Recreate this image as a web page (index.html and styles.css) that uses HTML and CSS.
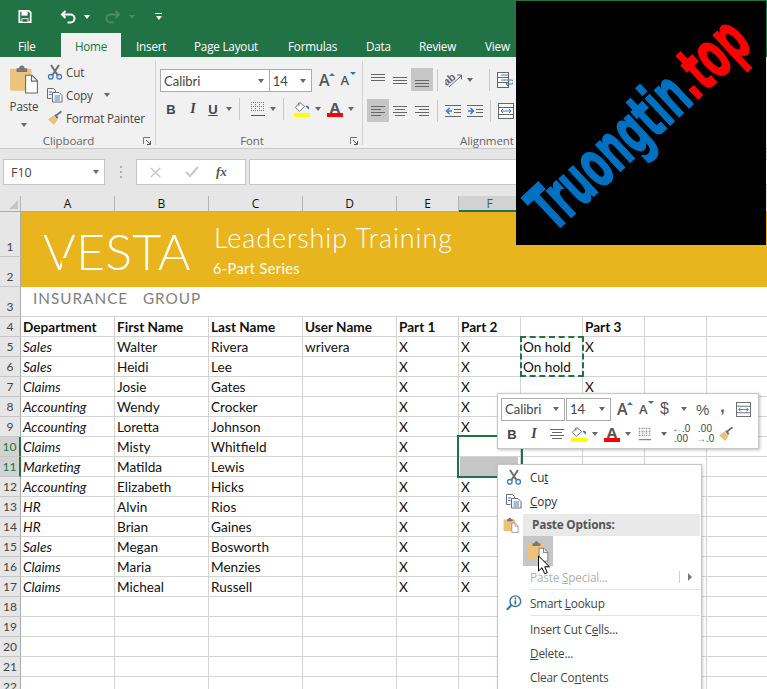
FILE: index.html
```html
<!DOCTYPE html>
<html lang="en">
<head>
<meta charset="utf-8">
<title>Excel</title>
<link rel="stylesheet" href="styles.css">
</head>
<body>
<svg class="sprite" aria-hidden="true">
  <symbol id="save" viewBox="0 0 16 16"><path d="M1.500 1.500h11l2 2v11h-13z" fill="none" stroke="#fff" stroke-width="2"/><rect x="4" y="2" width="7" height="5" fill="#fff"/><rect x="4" y="10" width="8" height="4" fill="#fff"/><rect x="5" y="11" width="6" height="3" fill="#217346"/></symbol>
  <symbol id="undo" viewBox="0 0 16 16"><path d="M5 2 1.500 5.500 5 9M2 5.500h8a4 4 0 0 1 0 8H7" fill="none" stroke="currentColor" stroke-width="2"/></symbol>
  <symbol id="redo" viewBox="0 0 16 16"><path d="M11 2l3.500 3.500L11 9M14 5.500H6a4 4 0 0 0 0 8h3" fill="none" stroke="currentColor" stroke-width="2"/></symbol>
  <symbol id="cut" viewBox="0 0 16 16"><path d="M4 1l6.500 10M12 1 5.500 11" stroke="#6d6d6d" stroke-width="2" fill="none"/><circle cx="3.800" cy="12.800" r="2.300" fill="none" stroke="#3f7cbc" stroke-width="1.300"/><circle cx="12.200" cy="12.800" r="2.300" fill="none" stroke="#3f7cbc" stroke-width="1.300"/></symbol>
  <symbol id="copy" viewBox="0 0 16 16"><path d="M.5 1.500h6l2 2v2M.5 1.500v10h4" fill="none" stroke="#6d6d6d"/><path d="M5.500 5.500h6.500l3 3v6.500H5.500z" fill="#fff" stroke="#6d6d6d"/><path d="M2 5h3M2 7.500h2.500M7.500 9h5.500M7.500 11h5.500M7.500 13h5.500" stroke="#3f7cbc"/></symbol>
  <symbol id="brush" viewBox="0 0 16 16"><path d="M1 9.500 6.500 5.500 10.500 10 7 15z" fill="#e9c27e"/><path d="M7 5l3 4 1.500-1.500L10 6l5-4-1-1.500-5 4z" fill="#6d6d6d"/></symbol>
  <symbol id="paste" viewBox="0 0 28 28"><path d="M1 4.500h19a1 1 0 0 1 1 1V25H2a1 1 0 0 1-1-1z" fill="#edc27c"/><path d="M7 4h2.500a2.500 2.500 0 0 1 5 0H17v3.500H7z" fill="#777"/><path d="M15.500 10.500h6l5 5V27h-11z" fill="#fff" stroke="#666"/><path d="M21 10.500v5.500h5.500" fill="none" stroke="#666"/></symbol>
  <symbol id="launch" viewBox="0 0 8 8"><path d="M.5 7V.5H7" fill="none" stroke="#777"/><path d="M3 3l4 4M7.500 4v3.500H4" fill="none" stroke="#555"/></symbol>
  <symbol id="top" viewBox="0 0 16 16"><path d="M1 2.500h14M1 5.500h14M1 8.500h14" stroke="#666"/></symbol>
  <symbol id="mid" viewBox="0 0 16 16"><path d="M1 5.500h14M1 8.500h14M1 11.500h14" stroke="#666"/></symbol>
  <symbol id="bot" viewBox="0 0 16 16"><path d="M1 8.500h14M1 11.500h14M1 14.500h14" stroke="#666"/></symbol>
  <symbol id="left" viewBox="0 0 16 16"><path d="M1 3.500h14M1 6.500h10M1 9.500h14M1 12.500h10" stroke="#666"/></symbol>
  <symbol id="center" viewBox="0 0 16 16"><path d="M1 3.500h14M3 6.500h10M1 9.500h14M3 12.500h10" stroke="#666"/></symbol>
  <symbol id="right" viewBox="0 0 16 16"><path d="M1 3.500h14M5 6.500h10M1 9.500h14M5 12.500h10" stroke="#666"/></symbol>
  <symbol id="outdent" viewBox="0 0 16 16"><path d="M0 2.500h16M9 6.500h7M9 9.500h7M0 13.500h16" stroke="#666"/><path d="M7 8H2M4.500 5 1.500 8l3 3" fill="none" stroke="#3f7cbc" stroke-width="1.500"/></symbol>
  <symbol id="indent" viewBox="0 0 16 16"><path d="M0 2.500h16M9 6.500h7M9 9.500h7M0 13.500h16" stroke="#666"/><path d="M1 8h5M3.500 5l3 3-3 3" fill="none" stroke="#3f7cbc" stroke-width="1.500"/></symbol>
  <symbol id="orient" viewBox="0 0 18 16"><text x="0" y="12" font-family="Liberation Sans" font-size="11" font-weight="700" fill="#666" transform="rotate(-40 4 11)">ab</text><path d="M4 15 16 4M12 3h4.500v4.500" fill="none" stroke="#666"/></symbol>
  <symbol id="wrap" viewBox="0 0 16 16"><rect x=".5" y=".5" width="11" height="15" fill="#fff" stroke="#666"/><path d="M.5 5.500h11M.5 10.500h11" stroke="#666"/><path d="M4 3h8M4 8h10.500a1.500 1.500 0 0 1 0 4H9M11 10l-2 2 2 2" fill="none" stroke="#3f7cbc"/></symbol>
  <symbol id="merge" viewBox="0 0 16 16"><rect x=".5" y=".5" width="15" height="15" fill="#fff" stroke="#666"/><path d="M.5 4.500h15M.5 11.500h15" stroke="#666"/><path d="M3 8h10M5 6 3 8l2 2M11 6l2 2-2 2" fill="none" stroke="#3f7cbc"/></symbol>
  <symbol id="bucket" viewBox="0 0 18 12"><path d="M6.500 1 1.500 6.500 6 11l6-5.500z" fill="#fff" stroke="#666"/><path d="M5.500 1v4" stroke="#666"/><path d="M13 5c2-1 4 0 4 2s-1 2-1.500 1-1.500-1-2.500-3z" fill="#3f7cbc"/></symbol>
  <symbol id="borders" viewBox="0 0 16 16"><path d="M1 1.500h14M1 5.500h14M1 9.500h14M1.500 1v10M5.500 1v10M9.500 1v10M13.500 1v10" stroke="#777" stroke-dasharray="1 1"/><path d="M1 14.500h14" stroke="#555"/></symbol>
  <symbol id="lookup" viewBox="0 0 18 18"><circle cx="10.500" cy="7" r="6" fill="#fff" stroke="#2e75b6" stroke-width="1.600"/><path d="M6 11.500 1 16.500" stroke="#2e75b6" stroke-width="2.400"/><circle cx="10.500" cy="4" r="1.100" fill="#555"/><path d="M10.500 6v4.500" stroke="#555" stroke-width="1.800"/></symbol>
  <symbol id="arrow" viewBox="0 0 13 20"><path d="M1 1v15l3.500-3.300 2.700 6 2.600-1.100-2.600-5.800H12z" fill="#fff" stroke="#000"/></symbol>
</svg>

<div class="app">
  <header class="title">
    <svg class="qa-save"><use href="#save"/></svg>
    <svg class="qa-undo"><use href="#undo"/></svg><span class="caret white"></span>
    <svg class="qa-redo"><use href="#redo"/></svg><span class="caret dim"></span>
    <span class="qa-custom"><span class="bar"></span><span class="caret white"></span></span>
  </header>
  <nav class="tabs">
    <span class="tab file">File</span>
    <span class="tab home">Home</span>
    <span class="tab insert">Insert</span>
    <span class="tab pl">Page Layout</span>
    <span class="tab fm">Formulas</span>
    <span class="tab dt">Data</span>
    <span class="tab rv">Review</span>
    <span class="tab vw">View</span>
  </nav>
  <section class="ribbon">
    <div class="group g-clip">
      <div class="body clip">
        <div class="paste-btn">
          <svg class="i-paste"><use href="#paste"/></svg>
          <span class="paste-label">Paste</span>
          <span class="caret"></span>
        </div>
        <div class="clip-list">
          <div class="clip-item"><svg class="i16"><use href="#cut"/></svg><span>Cut</span></div>
          <div class="clip-item"><svg class="i16"><use href="#copy"/></svg><span>Copy</span><span class="caret c-copy"></span></div>
          <div class="clip-item"><svg class="i16"><use href="#brush"/></svg><span>Format Painter</span></div>
        </div>
      </div>
      <div class="label"><span class="label-text">Clipboard</span><svg class="launch"><use href="#launch"/></svg></div>
    </div>
    <div class="group g-font">
      <div class="body font">
        <div class="row r1">
          <div class="select s-font"><span>Calibri</span><span class="caret"></span></div>
          <div class="select s-size"><span>14</span><span class="caret"></span></div>
          <span class="glyph grow">A<span class="up"></span></span>
          <span class="glyph shrink">A<span class="down"></span></span>
        </div>
        <div class="row r2">
          <span class="fmt b">B</span>
          <span class="fmt it">I</span>
          <span class="fmt un">U</span>
          <span class="caret"></span>
          <span class="vsep"></span>
          <svg class="i16"><use href="#borders"/></svg>
          <span class="caret"></span>
          <span class="vsep"></span>
          <span class="color c-fill"><svg class="i-bucket"><use href="#bucket"/></svg><span class="swatch yellow"></span></span>
          <span class="caret"></span>
          <span class="color colorA"><span class="aletter">A</span><span class="swatch red"></span></span>
          <span class="caret"></span>
        </div>
      </div>
      <div class="label"><span class="label-text">Font</span><svg class="launch"><use href="#launch"/></svg></div>
    </div>
    <div class="group g-align">
      <div class="body align">
        <div class="row ar1">
          <span class="ab"><svg class="i16"><use href="#top"/></svg></span>
          <span class="ab"><svg class="i16"><use href="#mid"/></svg></span>
          <span class="ab on"><svg class="i16"><use href="#bot"/></svg></span>
          <span class="vsep v-a"></span>
          <svg class="i18"><use href="#orient"/></svg><span class="caret"></span>
          <span class="vsep v-b"></span>
          <svg class="i16"><use href="#wrap"/></svg>
        </div>
        <div class="row ar2">
          <span class="ab on"><svg class="i16"><use href="#left"/></svg></span>
          <span class="ab"><svg class="i16"><use href="#center"/></svg></span>
          <span class="ab"><svg class="i16"><use href="#right"/></svg></span>
          <span class="vsep v-a"></span>
          <svg class="i16"><use href="#outdent"/></svg>
          <svg class="i16 ind"><use href="#indent"/></svg>
          <span class="vsep"></span>
          <svg class="i16"><use href="#merge"/></svg>
        </div>
      </div>
      <div class="label l-align"><span class="label-text">Alignment</span></div>
    </div>
  </section>
  <section class="fbar">
    <div class="namebox"><span>F10</span><span class="caret"></span></div>
    <span class="grip"></span>
    <div class="fxbox">
      <svg class="fx-x" viewBox="0 0 12 12"><path d="M1 1l10 10M11 1 1 11" stroke="#c8c8c8" stroke-width="1.600"/></svg>
      <svg class="fx-c" viewBox="0 0 14 12"><path d="M1 6l4 4 8-9" fill="none" stroke="#c8c8c8" stroke-width="2"/></svg>
      <span class="fx">fx</span>
    </div>
    <div class="finput"></div>
  </section>
  <section class="sheet">
    <div class="hd corner"><span class="tri"></span></div><div class="hd">A</div><div class="hd">B</div><div class="hd">C</div><div class="hd">D</div><div class="hd">E</div><div class="hd active-col">F</div><div class="hd">G</div><div class="hd">H</div><div class="hd">I</div><div class="hd">J</div>

    <div class="rh">1</div>
    <div class="banner">
      <div class="vesta">VESTA<span class="vgap"></span></div>
      <div class="btitle"><div class="lead">Leadership Training</div><div class="series">6-Part Series</div></div>
    </div>
    <div class="rh">2</div>
    <div class="rh">3</div><div class="ins">INSURANCE&nbsp;&nbsp; GROUP</div>

    <div class="rh">4</div><div class="c h">Department</div><div class="c h">First Name</div><div class="c h">Last Name</div><div class="c h">User Name</div><div class="c h">Part 1</div><div class="c h">Part 2</div><div class="c"></div><div class="c h">Part 3</div><div class="c"></div><div class="c"></div>
    <div class="rh">5</div><div class="c e">Sales</div><div class="c">Walter</div><div class="c">Rivera</div><div class="c">wrivera</div><div class="c">X</div><div class="c">X</div><div class="c">On hold</div><div class="c">X</div><div class="c"></div><div class="c"></div>
    <div class="rh">6</div><div class="c e">Sales</div><div class="c">Heidi</div><div class="c">Lee</div><div class="c"></div><div class="c">X</div><div class="c">X</div><div class="c">On hold</div><div class="c"></div><div class="c"></div><div class="c"></div>
    <div class="rh">7</div><div class="c e">Claims</div><div class="c">Josie</div><div class="c">Gates</div><div class="c"></div><div class="c">X</div><div class="c">X</div><div class="c"></div><div class="c">X</div><div class="c"></div><div class="c"></div>
    <div class="rh">8</div><div class="c e">Accounting</div><div class="c">Wendy</div><div class="c">Crocker</div><div class="c"></div><div class="c">X</div><div class="c">X</div><div class="c"></div><div class="c"></div><div class="c"></div><div class="c"></div>
    <div class="rh">9</div><div class="c e">Accounting</div><div class="c">Loretta</div><div class="c">Johnson</div><div class="c"></div><div class="c">X</div><div class="c">X</div><div class="c"></div><div class="c"></div><div class="c"></div><div class="c"></div>
    <div class="rh active-row">10</div><div class="c e">Claims</div><div class="c">Misty</div><div class="c">Whitfield</div><div class="c"></div><div class="c">X</div><div class="c"></div><div class="c"></div><div class="c"></div><div class="c"></div><div class="c"></div>
    <div class="rh active-row">11</div><div class="c e">Marketing</div><div class="c">Matilda</div><div class="c">Lewis</div><div class="c"></div><div class="c">X</div><div class="c grey"></div><div class="c"></div><div class="c"></div><div class="c"></div><div class="c"></div>
    <div class="rh">12</div><div class="c e">Accounting</div><div class="c">Elizabeth</div><div class="c">Hicks</div><div class="c"></div><div class="c">X</div><div class="c">X</div><div class="c"></div><div class="c"></div><div class="c"></div><div class="c"></div>
    <div class="rh">13</div><div class="c e">HR</div><div class="c">Alvin</div><div class="c">Rios</div><div class="c"></div><div class="c">X</div><div class="c">X</div><div class="c"></div><div class="c"></div><div class="c"></div><div class="c"></div>
    <div class="rh">14</div><div class="c e">HR</div><div class="c">Brian</div><div class="c">Gaines</div><div class="c"></div><div class="c">X</div><div class="c">X</div><div class="c"></div><div class="c"></div><div class="c"></div><div class="c"></div>
    <div class="rh">15</div><div class="c e">Sales</div><div class="c">Megan</div><div class="c">Bosworth</div><div class="c"></div><div class="c">X</div><div class="c">X</div><div class="c"></div><div class="c"></div><div class="c"></div><div class="c"></div>
    <div class="rh">16</div><div class="c e">Claims</div><div class="c">Maria</div><div class="c">Menzies</div><div class="c"></div><div class="c">X</div><div class="c">X</div><div class="c"></div><div class="c"></div><div class="c"></div><div class="c"></div>
    <div class="rh">17</div><div class="c e">Claims</div><div class="c">Micheal</div><div class="c">Russell</div><div class="c"></div><div class="c">X</div><div class="c">X</div><div class="c"></div><div class="c"></div><div class="c"></div><div class="c"></div>
    <div class="rh">18</div><div class="c"></div><div class="c"></div><div class="c"></div><div class="c"></div><div class="c"></div><div class="c"></div><div class="c"></div><div class="c"></div><div class="c"></div><div class="c"></div>
    <div class="rh">19</div><div class="c"></div><div class="c"></div><div class="c"></div><div class="c"></div><div class="c"></div><div class="c"></div><div class="c"></div><div class="c"></div><div class="c"></div><div class="c"></div>
    <div class="rh">20</div><div class="c"></div><div class="c"></div><div class="c"></div><div class="c"></div><div class="c"></div><div class="c"></div><div class="c"></div><div class="c"></div><div class="c"></div><div class="c"></div>
    <div class="rh">21</div><div class="c"></div><div class="c"></div><div class="c"></div><div class="c"></div><div class="c"></div><div class="c"></div><div class="c"></div><div class="c"></div><div class="c"></div><div class="c"></div>
    <div class="rh">22</div><div class="c"></div><div class="c"></div><div class="c"></div><div class="c"></div><div class="c"></div><div class="c"></div><div class="c"></div><div class="c"></div><div class="c"></div><div class="c"></div>

    <div class="ants"></div>
    <div class="selection"></div>
  </section>
</div>

<div class="mini">
  <div class="mini-row">
    <div class="select m-font"><span>Calibri</span><span class="caret"></span></div>
    <div class="select m-size"><span>14</span><span class="caret"></span></div>
    <span class="glyph m-grow">A<span class="up"></span></span>
    <span class="glyph m-shrink">A<span class="down"></span></span>
    <span class="m-txt m-dollar">$</span><span class="caret"></span>
    <span class="m-txt m-pct">%</span>
    <span class="m-txt m-comma">,</span>
    <svg class="i-merge"><use href="#merge"/></svg>
  </div>
  <div class="mini-row mr2">
    <span class="fmt b">B</span>
    <span class="fmt it mit">I</span>
    <svg class="i16 mc"><use href="#center"/></svg>
    <span class="color mb"><svg class="i-bucket"><use href="#bucket"/></svg><span class="swatch yellow"></span></span>
    <span class="caret"></span>
    <span class="color colorA mA"><span class="aletter">A</span><span class="swatch red"></span></span>
    <span class="caret"></span>
    <svg class="i-mborder"><use href="#borders"/></svg>
    <span class="caret"></span>
    <span class="dec"><span class="dec-a"><span class="blue">←</span>.0</span><span class="dec-b">.00</span></span>
    <span class="dec dec2"><span class="dec-a">.00</span><span class="dec-b"><span class="blue">→</span>.0</span></span>
    <svg class="i-mbrush"><use href="#brush"/></svg>
  </div>
</div>

<div class="menu">
  <div class="mi"><span class="gut"><svg class="i16"><use href="#cut"/></svg></span><span class="mt blue-t">Cu<u>t</u></span></div>
  <div class="mi"><span class="gut"><svg class="i16"><use href="#copy"/></svg></span><span class="mt blue-t"><u>C</u>opy</span></div>
  <div class="mi-head"><span class="gut"><svg class="i-small-paste"><use href="#paste"/></svg></span><span class="mh">Paste Options:</span></div>
  <div class="mi-paste"><span class="pbtn"><svg class="i-paste2"><use href="#paste"/></svg></span></div>
  <div class="mi special"><span class="gut"></span><span class="mt dis">Paste <u>S</u>pecial...</span><span class="sub"><span class="subbar"></span><span class="subtri"></span></span></div>
  <div class="msep"></div>
  <div class="mi"><span class="gut"><svg class="i16"><use href="#lookup"/></svg></span><span class="mt">Smart <u>L</u>ookup</span></div>
  <div class="msep"></div>
  <div class="mi"><span class="gut"></span><span class="mt">Insert Cut C<u>e</u>lls...</span></div>
  <div class="mi"><span class="gut"></span><span class="mt"><u>D</u>elete...</span></div>
  <div class="mi"><span class="gut"></span><span class="mt">Clear Co<u>n</u>tents</span></div>
</div>
<svg class="cursor"><use href="#arrow"/></svg>

<div class="mark"><div class="mark-text"><span class="m-blue">Truongtin</span><span class="m-red">.top</span></div></div>
</body>
</html>
```
FILE: styles.css
```css
* { box-sizing: border-box; }
html, body { margin: 0; height: 689px; overflow: hidden; }
body { background: #e6e6e6; font-family: "Open Sans", "Noto Sans", sans-serif; color: #444; position: relative; width: 767px; }
.sprite { display: none; }
svg { display: block; flex: none; }
.i16 { width: 16px; height: 16px; }
.i18 { width: 18px; height: 16px; }

.caret { display: inline-block; width: 0; height: 0; border: 3.5px solid transparent; border-top: 4px solid #666; border-bottom: 0; flex: none; }
.caret.white { border-top-color: #fff; }
.caret.dim { border-top-color: #4c8a69; }

.title { height: 33px; background: #217346; display: flex; align-items: center; color: #fff; padding-left: 18px; }
.qa-save { width: 14px; height: 15px; margin-right: 28px; }
.qa-undo { width: 17px; height: 16px; color: #fff; margin-right: 7px; }
.qa-redo { width: 17px; height: 16px; color: #4c8a69; margin: 0 8px 0 14px; }
.qa-custom { margin-left: 20px; display: flex; flex-direction: column; align-items: center; gap: 2px; }
.bar { width: 7px; height: 1px; background: #fff; }

.tabs { height: 24px; background: #217346; display: flex; font-size: 11.7px; color: #fff; letter-spacing: -.2px; }
.tab { display: flex; align-items: center; height: 24px; padding-top: 1px; flex: none; }
.file { width: 61px; padding-left: 18px; }
.home { width: 60px; background: #f1f1f1; color: #217346; margin-right: 15px; justify-content: center; }
.insert { width: 58px; }
.pl { width: 94px; }
.fm { width: 78px; }
.dt { width: 53px; }
.rv { width: 66px; }

.ribbon { height: 92px; background: #f1f1f1; border-bottom: 1px solid #c9c9c9; display: flex; padding-top: 4px; }
.group { display: flex; flex-direction: column; height: 84px; border-right: 1px solid #d2d2d2; }
.g-clip { width: 156px; }
.g-font { width: 207px; }
.g-align { flex: 1; border-right: 0; }
.body { height: 72px; flex: none; }
.label { height: 14px; flex: none; font-size: 11.5px; color: #666; display: flex; align-items: center; justify-content: center; position: relative; letter-spacing: -.1px; }
.g-clip .label { padding-right: 18px; }
.g-font .label { padding-right: 14px; }
.l-align { justify-content: flex-start; padding-left: 97px; }
.launch { width: 8px; height: 8px; position: absolute; right: 4px; top: 4px; }

.clip { display: flex; padding-left: 8px; }
.paste-btn { width: 32px; display: flex; flex-direction: column; align-items: center; font-size: 11.7px; }
.i-paste { width: 30px; height: 30px; margin-top: 3px; }
.paste-label { margin-top: 3px; line-height: 18px; letter-spacing: -.2px; }
.paste-btn .caret { margin-top: 8px; }
.clip-list { margin-left: 7px; display: flex; flex-direction: column; margin-top: -1px; }
.clip-item { display: flex; align-items: center; height: 23px; gap: 3px; font-size: 11.7px; letter-spacing: -.2px; }
.c-copy { margin-left: 8px; }

.font { padding: 8px 0 0 4px; }
.row { display: flex; align-items: center; }
.r1 { height: 23px; }
.r2 { height: 22px; margin-top: 6px; }
.select { display: flex; align-items: center; justify-content: space-between; background: #fff; border: 1px solid #ababab; height: 23px; font-family: "Lato", sans-serif; font-size: 13px; color: #444; padding: 0 5px 0 3px; }
.s-font { width: 111px; border-right: 0; }
.s-size { width: 44px; }
.glyph { position: relative; font-size: 15px; font-weight: 600; color: #555; width: 22px; display: block; line-height: 23px; }
.grow { margin-left: 7px; font-size: 16px; }
.shrink { font-size: 13px; }
.up, .down { position: absolute; width: 0; height: 0; border: 3px solid transparent; left: 10px; }
.up { border-bottom: 3px solid #2e75b6; border-top: 0; top: 4px; }
.down { border-top: 3px solid #2e75b6; border-bottom: 0; top: 3px; left: 9px; }
.fmt { font-size: 13px; color: #444; width: 22px; text-align: center; font-family: "Liberation Sans", sans-serif; }
.b { font-weight: 700; }
.it { font-style: italic; font-family: "Liberation Serif", serif; font-weight: 700; font-size: 14px; }
.un { font-weight: 700; text-decoration: underline; width: 18px; margin-right: 4px; }
.vsep { width: 1px; height: 22px; background: #c8c8c8; margin: 0 7px; flex: none; }
.r2 .i16 { margin-left: 3px; margin-right: 4px; }
.color { display: flex; flex-direction: column; align-items: center; width: 16px; margin-right: 5px; }
.c-fill { margin-left: 3px; }
.colorA { margin-left: 6px; }
.i-bucket { width: 16px; height: 12px; }
.swatch { width: 16px; height: 4px; display: block; }
.yellow { background: #ff0; }
.red { background: #f00; }
.aletter { font-size: 15px; line-height: 12px; height: 12px; font-weight: 700; color: #555; }

.align { padding: 7px 0 0 4px; }
.ar1 { height: 23px; }
.ar2 { height: 23px; margin-top: 8px; }
.ab { width: 22px; height: 23px; display: flex; align-items: center; justify-content: center; }
.on { background: #c6c6c6; }
.ar1 .caret { margin-left: 4px; }
.v-a { margin: 0 7px 0 4px; }
.v-b { margin: 0 7px 0 16px; }
.ind { margin-left: 6px; }

.fbar { height: 47px; padding: 10px 0 11px 3px; display: flex; }
.namebox { width: 102px; height: 26px; background: #fff; border: 1px solid #c6c6c6; display: flex; align-items: center; justify-content: space-between; padding: 0 5px 0 7px; font-size: 12.5px; color: #444; }
.grip { width: 2px; height: 12px; margin: 7px 0 0 15px; background: repeating-linear-gradient(#b0b0b0 0 2px, transparent 2px 5px); }
.fxbox { width: 110px; height: 26px; margin-left: 14px; background: #fff; border: 1px solid #c6c6c6; display: flex; align-items: center; padding-left: 13px; }
.fx-x { width: 11px; height: 11px; }
.fx-c { width: 14px; height: 12px; margin-left: 24px; }
.fx { margin-left: 17px; font-family: "Liberation Serif", serif; font-style: italic; font-weight: 700; font-size: 13px; color: #555; }
.finput { flex: 1; margin-left: 3px; height: 26px; background: #fff; border: 1px solid #c6c6c6; border-right: 0; }

.sheet { position: relative; display: grid; grid-template-columns: 21px repeat(4, 94px) repeat(6, 62px); grid-template-rows: 16px 45px 30px 30px; grid-auto-rows: 20px; background: #fff; font-family: "Lato", sans-serif; font-size: 13.6px; color: #111; }
.hd { background: #e6e6e6; border-right: 1px solid #b4b4b4; border-bottom: 1px solid #ababab; font-size: 12px; text-align: center; line-height: 15px; color: #111; font-family: "Open Sans", sans-serif; }
.corner { position: relative; }
.tri { position: absolute; right: 2px; bottom: 2px; width: 0; height: 0; border-left: 9px solid transparent; border-bottom: 9px solid #c6c6c6; }
.active-col { background: #d2d2d2; border-bottom: 2px solid #217346; color: #217346; }
.rh { background: #e6e6e6; border-right: 1px solid #ababab; border-bottom: 1px solid #c6c6c6; font-size: 12px; text-align: center; color: #444; display: flex; align-items: flex-end; justify-content: center; line-height: 19px; font-family: "Lato", sans-serif; }
.active-row { background: #d2d2d2; border-right: 2px solid #217346; color: #217346; }
.banner { grid-column: 2 / -1; grid-row: span 2; background: #e8b51f; color: #fff; display: flex; font-family: "Lato", sans-serif; }
.vesta { position: relative; width: 192px; padding: 9px 0 0 22px; font-size: 50px; line-height: 60px; font-weight: 300; letter-spacing: .2px; }
.vgap { position: absolute; left: 41px; top: 46px; width: 12px; height: 13px; background: #e8b51f; }
.btitle { padding-top: 6px; }
.lead { font-size: 27px; line-height: 40px; font-weight: 300; letter-spacing: .9px; padding-left: 1px; }
.series { font-size: 14.5px; line-height: 20px; margin-top: 1px; letter-spacing: .4px; }
.ins { grid-column: 2 / -1; border-bottom: 1px solid #d4d4d4; color: #7f7f7f; font-size: 15.3px; letter-spacing: 1px; padding-left: 12px; line-height: 22px; }
.c { border-right: 1px solid #d4d4d4; border-bottom: 1px solid #d4d4d4; padding-left: 2px; line-height: 20px; white-space: nowrap; overflow: hidden; }
.h { font-weight: 700; }
.e { font-style: italic; }
.grey { background: linear-gradient(#c6c6c6, #c6c6c6) no-repeat 1px -1px / 58px 20px; }
.ants { position: absolute; grid-column: 8 / 9; grid-row: 6 / 8; inset: -1px -1px 0 -1px; border: 2px dashed #217346; }
.selection { position: absolute; grid-column: 7 / 8; grid-row: 11 / 13; inset: -2px -2px -1px -2px; border: 2px solid #217346; }

.mini { position: absolute; left: 497px; top: 393px; width: 262px; height: 56px; background: #fff; border: 1px solid #c6c6c6; box-shadow: 1px 1px 3px rgba(0,0,0,.25); padding: 3px 0 0 3px; }
.mini-row { display: flex; align-items: center; height: 24px; }
.m-font { width: 64px; border-right: 1px solid #ababab; }
.m-size { width: 45px; margin-left: 1px; }
.m-grow { margin-left: 6px; width: 20px; font-size: 16px; }
.m-shrink { width: 18px; font-size: 13px; margin-left: 2px; }
.m-txt { font-family: "Liberation Sans", sans-serif; color: #555; }
.m-dollar { font-size: 16px; margin-left: 3px; margin-right: 12px; }
.m-pct { font-size: 15px; margin-left: 9px; }
.m-comma { font-size: 16px; font-weight: 700; margin-left: 11px; margin-top: -4px; }
.i-merge { width: 15px; height: 15px; margin-left: 11px; }
.mr2 { margin-top: 1px; height: 24px; }
.mc { margin-left: 4px; }
.mb { margin-left: 6px; }
.mA { margin-left: 6px; }
.i-mborder { width: 14px; height: 14px; margin-left: 7px; margin-right: 9px; }
.dec { display: flex; flex-direction: column; font-family: "Liberation Sans", sans-serif; font-size: 10px; line-height: 10px; color: #444; text-align: right; width: 16px; margin-left: 5px; }
.dec2 { margin-left: 8px; }
.blue { color: #2e75b6; }
.i-mbrush { width: 16px; height: 16px; margin-left: 6px; }

.menu { position: absolute; left: 497px; top: 464px; width: 205px; height: 240px; background: #fff; border: 1px solid #c6c6c6; box-shadow: 1px 1px 3px rgba(0,0,0,.2); font-size: 11.8px; letter-spacing: -.2px; }
.mi { display: flex; align-items: center; height: 24px; }
.gut { width: 32px; display: flex; justify-content: center; flex: none; }
.mt { color: #444; }
.blue-t { color: #333; }
.dis { color: #b1b1b1; }
.special { position: relative; margin-top: -1px; }
.sub { position: absolute; right: 9px; top: 3px; display: flex; align-items: center; gap: 8px; height: 18px; }
.subbar { width: 1px; height: 12px; background: #d0d0d0; }
.subtri { width: 0; height: 0; border-left: 4px solid #777; border-top: 4px solid transparent; border-bottom: 4px solid transparent; }
.mi-head { display: flex; align-items: center; height: 22px; margin-top: 1px; }
.mi-head .gut { width: 25px; }
.mh { flex: 1; background: #e9e9e9; height: 22px; line-height: 21px; font-weight: 700; color: #555; padding-left: 9px; margin-right: 1px; }
.i-small-paste { width: 16px; height: 16px; }
.mi-paste { height: 30px; padding-left: 25px; }
.pbtn { display: flex; width: 30px; height: 30px; background: #c6c6c6; align-items: center; justify-content: center; }
.i-paste2 { width: 22px; height: 22px; }
.msep { height: 2px; background: #e4e4e4; margin-left: 33px; margin-right: 1px; border-bottom: 1px solid #fff; }
.cursor { position: absolute; left: 537px; top: 555px; width: 14px; height: 20px; }

.mark { position: absolute; left: 516px; top: 1px; width: 250px; height: 244px; background: #000; overflow: hidden; }
.mark-text { position: absolute; left: 123px; top: 123px; transform: translate(-50%, -50%) rotate(-43deg) scaleX(.54); font-family: "DejaVu Sans", sans-serif; font-weight: 700; font-size: 66px; white-space: nowrap; line-height: 1; -webkit-text-stroke: 1.500px; }
.m-blue { color: #0070c0; }
.m-red { color: #f00; }
```
